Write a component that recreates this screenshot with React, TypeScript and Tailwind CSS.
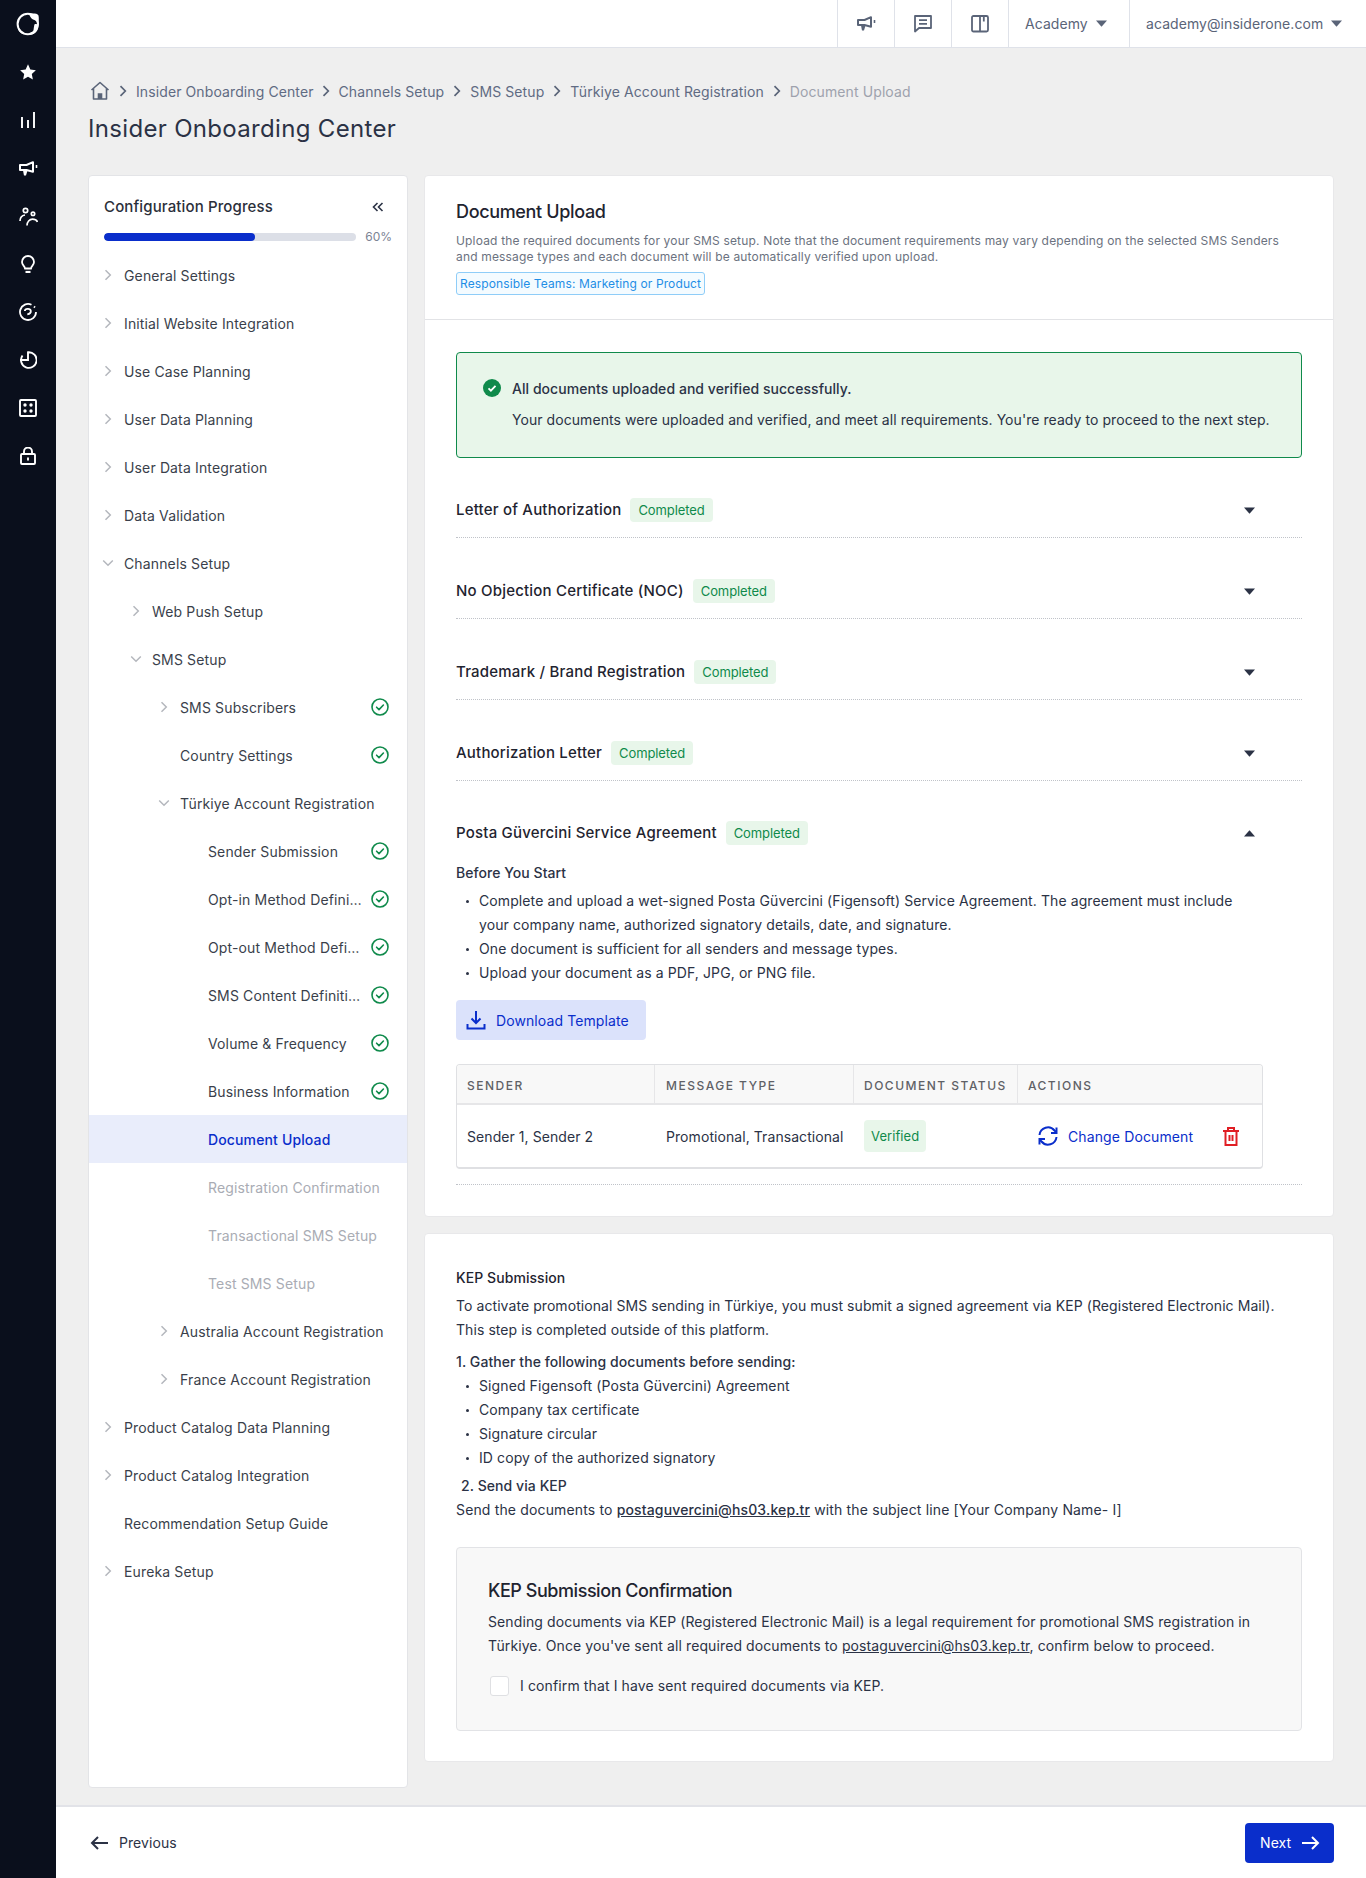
import React from "react";

const Check = () => (
  <svg width="18" height="18" viewBox="0 0 18 18" fill="none" className="shrink-0">
    <circle cx="9" cy="9" r="8" stroke="#0f8a4b" strokeWidth="1.6" />
    <path d="M5.6 9.200l2.400 2.400 4.400-4.600" stroke="#0f8a4b" strokeWidth="1.6" strokeLinecap="round" strokeLinejoin="round" />
  </svg>
);
const ChevR = () => (
  <svg width="8" height="12" viewBox="0 0 8 12" fill="none"><path d="M1.500 1.200L6.300 6l-4.800 4.800" stroke="#b4b7bd" strokeWidth="1.5" /></svg>
);
const ChevD = () => (
  <svg width="12" height="8" viewBox="0 0 12 8" fill="none"><path d="M1.200 1.500L6 6.300l4.800-4.800" stroke="#b4b7bd" strokeWidth="1.5" /></svg>
);
const BreadChev = () => (
  <svg width="8" height="12" viewBox="0 0 8 12" fill="none" className="shrink-0"><path d="M1.500 1.200L6.300 6l-4.800 4.800" stroke="#5a6478" strokeWidth="1.7" /></svg>
);
const Caret = ({ up = false, color = "#2b3245" }: { up?: boolean; color?: string }) => (
  <svg width="11" height="7" viewBox="0 0 11 7" className={up ? "rotate-180" : ""}><path d="M0 .5h11L5.500 6.800z" fill={color} /></svg>
);
const Megaphone = ({ c = "#fff" }: { c?: string }) => (
  <svg width="19" height="15" viewBox="0 0 19 15" fill="none">
    <path d="M1 4h6.500L14 1.200v9.600L7.500 9H1z" stroke={c} strokeWidth="2" strokeLinejoin="round" />
    <path d="M4 9.500h4.500L7 14.500H5z" fill={c} />
    <path d="M17.500 4v3" stroke={c} strokeWidth="1.6" />
  </svg>
);

type It = { t: string; l: 0 | 1 | 2 | 3; c?: "r" | "d"; ok?: boolean; a?: boolean; dis?: boolean };
const items: It[] = [
  { t: "General Settings", l: 0, c: "r" },
  { t: "Initial Website Integration", l: 0, c: "r" },
  { t: "Use Case Planning", l: 0, c: "r" },
  { t: "User Data Planning", l: 0, c: "r" },
  { t: "User Data Integration", l: 0, c: "r" },
  { t: "Data Validation", l: 0, c: "r" },
  { t: "Channels Setup", l: 0, c: "d" },
  { t: "Web Push Setup", l: 1, c: "r" },
  { t: "SMS Setup", l: 1, c: "d" },
  { t: "SMS Subscribers", l: 2, c: "r", ok: true },
  { t: "Country Settings", l: 2, ok: true },
  { t: "Türkiye Account Registration", l: 2, c: "d" },
  { t: "Sender Submission", l: 3, ok: true },
  { t: "Opt-in Method Defini…", l: 3, ok: true },
  { t: "Opt-out Method Defi…", l: 3, ok: true },
  { t: "SMS Content Definiti…", l: 3, ok: true },
  { t: "Volume & Frequency", l: 3, ok: true },
  { t: "Business Information", l: 3, ok: true },
  { t: "Document Upload", l: 3, a: true },
  { t: "Registration Confirmation", l: 3, dis: true },
  { t: "Transactional SMS Setup", l: 3, dis: true },
  { t: "Test SMS Setup", l: 3, dis: true },
  { t: "Australia Account Registration", l: 2, c: "r" },
  { t: "France Account Registration", l: 2, c: "r" },
  { t: "Product Catalog Data Planning", l: 0, c: "r" },
  { t: "Product Catalog Integration", l: 0, c: "r" },
  { t: "Recommendation Setup Guide", l: 0 },
  { t: "Eureka Setup", l: 0, c: "r" },
];
const pad = { 0: "pl-[35px]", 1: "pl-[63px]", 2: "pl-[91px]", 3: "pl-[119px]" };

const Row = ({ it }: { it: It }) => (
  <div className={`relative flex h-[48px] items-center pr-[18px] ${pad[it.l]} ${it.a ? "bg-[#e9edfb]" : ""}`}>
    {it.c && (
      <span className="absolute flex w-[12px] justify-center" style={{ left: { 0: 13, 1: 41, 2: 69, 3: 97 }[it.l] }}>
        {it.c === "r" ? <ChevR /> : <ChevD />}
      </span>
    )}
    <span
      className={`min-w-0 flex-1 whitespace-nowrap text-[14px] tracking-[0.14px] ${it.a ? "font-medium text-[#0a2ecb]" : it.dis ? "text-[#a9acb4]" : "text-[#3a3f4b]"}`}
    >
      {it.t}
    </span>
    {it.ok && <span className="ml-[9px]"><Check /></span>}
  </div>
);

const Badge = ({ t }: { t: string }) => (
  <span className="ml-[9px] rounded-[4px] bg-[#e8f6ea] px-[8px] text-[13px] leading-[24px] tracking-[-0.1px] text-[#0f8a4b]">{t}</span>
);

const Acc = ({ t, open }: { t: string; open?: boolean }) => (
  <div className="flex h-[24px] items-center">
    <span className="text-[15px] font-medium tracking-[0.2px] text-[#1f2430]">{t}</span>
    <Badge t="Completed" />
    <span className="ml-auto mr-[47px] flex"><Caret up={open} /></span>
  </div>
);

const Li = ({ children }: { children: React.ReactNode }) => (
  <div className="relative pl-[23px] text-[14px] leading-[24px] tracking-[0.1px] text-[#2b3245]">
    <span className="absolute left-[10px] top-[11px] h-[3px] w-[3px] rounded-full bg-[#2b3245]" />
    {children}
  </div>
);

const Slot = ({ children }: { children: React.ReactNode }) => (
  <div className="mt-[24px] flex h-[24px] items-center">{children}</div>
);

export default function App() {
  return (
    <div className="flex h-[1878px] w-[1366px] overflow-hidden bg-white text-[#2b3245] [font-family:Inter,'Liberation_Sans',sans-serif]">
      <aside className="flex w-[56px] shrink-0 flex-col items-center bg-[#0a0f1c] pt-[12px]">
        <div className="flex h-[24px] items-center">
          <svg width="24" height="24" viewBox="0 0 24 24" fill="none">
            <circle cx="11.800" cy="12" r="10.200" stroke="#fff" strokeWidth="2" />
            <path d="M13 1.500c4 0 8.500-.5 9.500 2 .5 2.500.5 5-.5 8-1-2-3-3.500-5-4-2-1-3.500-3.500-4-6z" fill="#fff" />
            <path d="M19 12c3-.500 3.500 1 3 4-.5 3-3 6-6.500 6.500-2 .5-3 0-2-1.500 1-1 3.500-.5 4-3 .5-2 .5-5.500 1.500-6z" fill="#fff" />
            <path d="M2 15c1.500 1 2.500 3 3.500 4.500l2 2.500c-3-.5-6-3.500-5.500-7z" fill="#fff" />
          </svg>
        </div>
        <Slot>
          <svg width="16" height="16" viewBox="0 0 24 24" fill="#fff"><path d="M12 .5l3.500 7.700 8.300 1-6.100 5.700 1.600 8.300L12 19.100 4.700 23.200l1.600-8.300L.2 9.200l8.300-1z" /></svg>
        </Slot>
        <Slot>
          <svg width="16" height="16" viewBox="0 0 16 16" fill="none" stroke="#fff" strokeWidth="1.900"><path d="M2 5v11M8 8v8M14 0v16" /></svg>
        </Slot>
        <Slot><Megaphone /></Slot>
        <Slot>
          <svg width="19" height="19" viewBox="0 0 19 19" fill="none" stroke="#fff" strokeWidth="1.700">
            <circle cx="6.500" cy="3.500" r="2.200" /><circle cx="14" cy="6.800" r="1.700" />
            <path d="M1 14c0-3 2-5.500 5-6" /><path d="M8 18.500c0-3.500 2.500-6.300 5.500-6.300 2.500 0 4.200 1 5 2.800" />
          </svg>
        </Slot>
        <Slot>
          <svg width="14" height="18" viewBox="0 0 14 18" fill="none" stroke="#fff" strokeWidth="1.800">
            <path d="M7 1a6 6 0 0 0-6 6c0 2.500 1.500 3.500 2.500 5l.5 1.500h6l.5-1.500c1-1.500 2.500-2.500 2.500-5a6 6 0 0 0-6-6z" /><path d="M4.500 17h5" strokeWidth="2.200" />
          </svg>
        </Slot>
        <Slot>
          <svg width="18" height="18" viewBox="0 0 18 18" fill="none" stroke="#fff" strokeWidth="1.800">
            <path d="M12.500 1.800A8 8 0 1 0 17 9" /><path d="M5.800 8c.2-2.500 5.500-3 6 0 .2 1.800-1.500 3-3.500 3.300" /><path d="M15 3.500l1 1" />
          </svg>
        </Slot>
        <Slot>
          <svg width="18" height="18" viewBox="0 0 18 18" fill="none" stroke="#fff" strokeWidth="1.900">
            <path d="M3.500 4.500a7.800 7.800 0 1 0 5.500-3.200v7.700H1" />
          </svg>
        </Slot>
        <Slot>
          <svg width="18" height="18" viewBox="0 0 18 18" fill="none">
            <rect x="1" y="1" width="16" height="16" rx="1" stroke="#fff" strokeWidth="1.900" />
            <circle cx="6" cy="6" r="1.700" fill="#fff" /><circle cx="12" cy="6" r="1.700" fill="#fff" />
            <circle cx="6" cy="12" r="1.700" fill="#fff" /><circle cx="12" cy="12" r="1.700" fill="#fff" />
          </svg>
        </Slot>
        <Slot>
          <svg width="16" height="18" viewBox="0 0 16 18" fill="none" stroke="#fff" strokeWidth="1.900">
            <rect x="1" y="7" width="14" height="10" rx="1" /><path d="M4 7V4.500a4 4 0 0 1 8 0V7" /><path d="M8 10.500v3" />
          </svg>
        </Slot>
      </aside>

      <div className="flex min-w-0 flex-1 flex-col">
        <header className="flex h-[48px] shrink-0 justify-end border-b border-[#dfe2e9] bg-white">
          {[0, 1, 2].map((i) => (
            <div key={i} className="flex w-[57px] items-center justify-center border-l border-[#dfe2e9]">
              {i === 0 && <Megaphone c="#5a6478" />}
              {i === 1 && (
                <svg width="18" height="18" viewBox="0 0 18 18" fill="none" stroke="#5a6478" strokeWidth="1.800">
                  <path d="M1 1h16v12H5l-4 3.500z" strokeLinejoin="round" /><path d="M5 5.200h8M5 8.800h8" />
                </svg>
              )}
              {i === 2 && (
                <svg width="18" height="18" viewBox="0 0 18 18" fill="none" stroke="#5a6478" strokeWidth="1.800">
                  <rect x="1" y="1" width="16" height="15.500" rx="1.500" /><path d="M9 1v15.500" /><path d="M12.800 1v5.500" />
                </svg>
              )}
            </div>
          ))}
          <div className="flex w-[121px] items-center border-l border-[#dfe2e9] pl-[16px] text-[14px] tracking-[0.07px] text-[#5a6478]">
            Academy<span className="ml-[8px] flex"><Caret color="#5a6478" /></span>
          </div>
          <div className="flex w-[237px] items-center border-l border-[#dfe2e9] pl-[16px] text-[14px] tracking-[0.07px] text-[#5a6478]">
            academy@insiderone.com<span className="ml-[8px] flex"><Caret color="#5a6478" /></span>
          </div>
        </header>

        <main className="flex min-h-0 flex-1 flex-col bg-[#efefef] pl-[32px] pr-[32px]">
          <div className="mt-[33px] flex h-[20px] items-center gap-[8px] pl-[2px] text-[14px] tracking-[0.1px] text-[#5f6b83]">
            <svg width="20" height="20" viewBox="0 0 20 20" fill="none" stroke="#5a6478" strokeWidth="1.600" className="mr-[1px]">
              <path d="M1.500 9L10 1.500 18.500 9M3.500 7.500V18h13V7.500" strokeLinejoin="round" /><path d="M8.500 18v-5h3v5" fill="#5a6478" />
            </svg>
            <BreadChev /><span className="ml-[1px]">Insider Onboarding Center</span>
            <BreadChev /><span className="mx-[1px]">Channels Setup</span>
            <BreadChev /><span className="mx-[1px]">SMS Setup</span>
            <BreadChev /><span className="mx-[1px]">Türkiye Account Registration</span>
            <BreadChev /><span className="mx-[1px] text-[#9ea2ad]">Document Upload</span>
          </div>
          <h1 className="mt-[12px] text-[24px] leading-[32px] tracking-[0.32px] text-[#2b3245]">Insider Onboarding Center</h1>

          <div className="mt-[30px] flex min-h-0 gap-[16px]">
            <section className="h-[1613px] w-[320px] shrink-0 rounded-[4px] border border-[#e3e4e7] bg-white">
              <div className="px-[15px] pt-[21px]">
                <div className="flex h-[20px] items-center justify-between">
                  <span className="text-[15px] font-medium tracking-[0.13px] text-[#2b2f3a]">Configuration Progress</span>
                  <svg width="12" height="10" viewBox="0 0 12 10" fill="none" stroke="#2b3245" strokeWidth="1.600" className="mr-[8px]">
                    <path d="M5.500 1L1.500 5l4 4M10.500 1l-4 4 4 4" />
                  </svg>
                </div>
                <div className="mt-[12px] flex h-[16px] items-center">
                  <div className="h-[8px] w-[254px] overflow-hidden rounded-full bg-[#dcdfe7]">
                    <div className="h-full w-[60%] rounded-full bg-[#0a2ecb]" />
                  </div>
                  <span className="ml-[9px] text-[12px] text-[#7b8394]">60%</span>
                </div>
              </div>
              <div className="mt-[6px]">
                {items.map((it) => <Row key={it.t} it={it} />)}
              </div>
            </section>

            <div className="flex min-w-0 flex-1 flex-col gap-[16px]">
              <section className="h-[1042px] rounded-[4px] border border-[#e8e8ea] bg-white">
                <div className="h-[144px] border-b border-[#e2e3e6] px-[31px] pt-[25px]">
                  <h2 className="text-[18px] font-medium leading-[22px] tracking-[-0.35px] text-[#1f2430]">Document Upload</h2>
                  <p className="mt-[10px] text-[12px] leading-[16px] tracking-[0.17px] text-[#6b7280]">
                    Upload the required documents for your SMS setup. Note that the document requirements may vary depending on the selected SMS Senders<br />
                    and message types and each document will be automatically verified upon upload.
                  </p>
                  <span className="mt-[7px] inline-block rounded-[3px] border border-[#8fcdf8] bg-[#f4fbff] px-[3px] text-[12px] leading-[21px] tracking-[0.12px] text-[#1f8ee6]">
                    Responsible Teams: Marketing or Product
                  </span>
                </div>
                <div className="px-[31px]">
                  <div className="mt-[32px] h-[106px] rounded-[4px] border border-[#0f8a4b] bg-[#e8f6ea] pl-[26px] pt-[25px]">
                    <div className="flex h-[20px] items-center gap-[11px] text-[14px] font-medium tracking-[0.05px] text-[#2b3245]">
                      <svg width="18" height="18" viewBox="0 0 18 18"><circle cx="9" cy="9" r="9" fill="#0f8a4b" /><path d="M5.500 9.300l2.400 2.400 4.600-4.800" stroke="#fff" strokeWidth="1.800" fill="none" /></svg>
                      All documents uploaded and verified successfully.
                    </div>
                    <div className="ml-[29px] mt-[12px] text-[14px] leading-[20px] tracking-[0.06px] text-[#2b3245]">
                      Your documents were uploaded and verified, and meet all requirements. You're ready to proceed to the next step.
                    </div>
                  </div>

                  {["Letter of Authorization", "No Objection Certificate (NOC)", "Trademark / Brand Registration", "Authorization Letter"].map((t, i) => (
                    <div key={t} className={`border-b border-dotted border-[#c0c3c9] ${i === 0 ? "h-[80px] pt-[40px]" : "h-[81px] pt-[41px]"}`}>
                      <Acc t={t} />
                    </div>
                  ))}
                  <div className="border-b border-dotted border-[#c0c3c9] pb-[15px] pt-[40px]">
                    <Acc t="Posta Güvercini Service Agreement" open />
                    <div className="mt-[16px] text-[14px] font-medium leading-[24px] tracking-[0.05px]">Before You Start</div>
                    <div className="mt-[4px]">
                      <Li>Complete and upload a wet-signed Posta Güvercini (Figensoft) Service Agreement. The agreement must include<br />your company name, authorized signatory details, date, and signature.</Li>
                      <Li>One document is sufficient for all senders and message types.</Li>
                      <Li>Upload your document as a PDF, JPG, or PNG file.</Li>
                    </div>
                    <div className="mt-[15px] flex h-[40px] w-[190px] items-center gap-[10px] rounded-[4px] bg-[#dbe2fb] pl-[10px] text-[14px] tracking-[0.1px] text-[#0a2ecb]">
                      <svg width="20" height="20" viewBox="0 0 20 20" fill="none" stroke="#0a2ecb" strokeWidth="2">
                        <path d="M10 1v12M5.500 8.500L10 13l4.500-4.500M1.500 14v4.500h17V14" />
                      </svg>
                      Download Template
                    </div>
                    <div className="mt-[24px] w-[807px] overflow-hidden rounded-[4px] border border-b-2 border-[#dfe0e3]">
                      <div className="flex h-[40px] border-b-2 border-[#e6e6e8] bg-[#f8f8f8] text-[12px] font-medium tracking-[1.5px] text-[#5f6166]">
                        <div className="flex w-[198px] items-center border-r border-[#e6e6e8] pl-[10px] pt-[3px]">SENDER</div>
                        <div className="flex w-[199px] items-center border-r border-[#e6e6e8] pl-[11px] pt-[3px]">MESSAGE TYPE</div>
                        <div className="flex w-[164px] items-center border-r border-[#e6e6e8] pl-[10px] pt-[3px]">DOCUMENT STATUS</div>
                        <div className="flex flex-1 items-center pl-[10px] pt-[3px]">ACTIONS</div>
                      </div>
                      <div className="flex h-[62px] items-center text-[14px] tracking-[0.07px]">
                        <div className="w-[198px] pl-[10px]">Sender 1, Sender 2</div>
                        <div className="w-[199px] whitespace-nowrap pl-[11px]">Promotional, Transactional</div>
                        <div className="w-[164px] pl-[10px]">
                          <span className="inline-block rounded-[4px] bg-[#e8f6ea] px-[7px] text-[13px] leading-[32px] text-[#0f8a4b]">Verified</span>
                        </div>
                        <div className="flex flex-1 items-center pl-[20px] text-[#0a2ecb]">
                          <svg width="20" height="20" viewBox="0 0 20 20" fill="none" stroke="#0a2ecb" strokeWidth="2">
                            <path d="M1.500 9a8.500 8.500 0 0 1 15-4.500L18 6" /><path d="M18.500 11a8.500 8.500 0 0 1-15 4.500L2 14" />
                            <path d="M18.500 1.500V7h-5.500M1.500 18.500V13h5.500" />
                          </svg>
                          <span className="ml-[10px] tracking-[0.12px]">Change Document</span>
                          <svg width="16" height="19" viewBox="0 0 16 19" fill="none" stroke="#e01e24" strokeWidth="2" className="ml-[30px]">
                            <path d="M0 4h16M5 4V1h6v3M2.500 4v14h11V4M6.500 8v6M9.500 8v6" />
                          </svg>
                        </div>
                      </div>
                    </div>
                  </div>
                </div>
              </section>

              <section className="h-[529px] rounded-[4px] border border-[#e8e8ea] bg-white px-[31px] pt-[32px] text-[14px] leading-[24px] tracking-[0.07px]">
                <div className="font-medium leading-[24px] text-[#1f2430]">KEP Submission</div>
                <p className="mt-[4px]">To activate promotional SMS sending in Türkiye, you must submit a signed agreement via KEP (Registered Electronic Mail).<br />This step is completed outside of this platform.</p>
                <div className="mt-[8px] font-medium">1. Gather the following documents before sending:</div>
                <Li>Signed Figensoft (Posta Güvercini) Agreement</Li>
                <Li>Company tax certificate</Li>
                <Li>Signature circular</Li>
                <Li>ID copy of the authorized signatory</Li>
                <div className="mt-[4px] pl-[5px] font-medium">2. Send via KEP</div>
                <p className="tracking-[0.15px]">Send the documents to <span className="font-medium underline">postaguvercini@hs03.kep.tr</span> with the subject line [Your Company Name- I]</p>
                <div className="mt-[25px] h-[184px] rounded-[4px] border border-[#e2e3e6] bg-[#f8f8f8] pl-[31px] pt-[31px]">
                  <div className="text-[18px] font-medium leading-[24px] tracking-[-0.45px] text-[#1f2430]">KEP Submission Confirmation</div>
                  <p className="mt-[7px] tracking-[0.1px]">Sending documents via KEP (Registered Electronic Mail) is a legal requirement for promotional SMS registration in<br />Türkiye. Once you've sent all required documents to <span className="underline">postaguvercini@hs03.kep.tr</span>, confirm below to proceed.</p>
                  <label className="mt-[16px] flex items-center">
                    <span className="ml-[2px] h-[20px] w-[19px] rounded-[3px] border border-[#dfe0e3] bg-white" />
                    <span className="ml-[11px] tracking-[0.12px]">I confirm that I have sent required documents via KEP.</span>
                  </label>
                </div>
              </section>
            </div>
          </div>
        </main>

        <footer className="flex h-[73px] shrink-0 items-center justify-between border-t-2 border-[#e2e3e8] bg-white pl-[34px] pr-[32px]">
          <div className="flex items-center gap-[11px] text-[14px] tracking-[0.07px] text-[#2b3245]">
            <svg width="18" height="14" viewBox="0 0 18 14" fill="none" stroke="#2b3245" strokeWidth="2"><path d="M18 7H2M8 1L2 7l6 6" /></svg>
            Previous
          </div>
          <div className="flex h-[40px] w-[89px] items-center gap-[11px] rounded-[4px] bg-[#0a2ecb] pl-[15px] text-[14px] tracking-[0.1px] text-white">
            Next
            <svg width="18" height="14" viewBox="0 0 18 14" fill="none" stroke="#fff" strokeWidth="2"><path d="M0 7h16M10 1l6 6-6 6" /></svg>
          </div>
        </footer>
      </div>
    </div>
  );
}
